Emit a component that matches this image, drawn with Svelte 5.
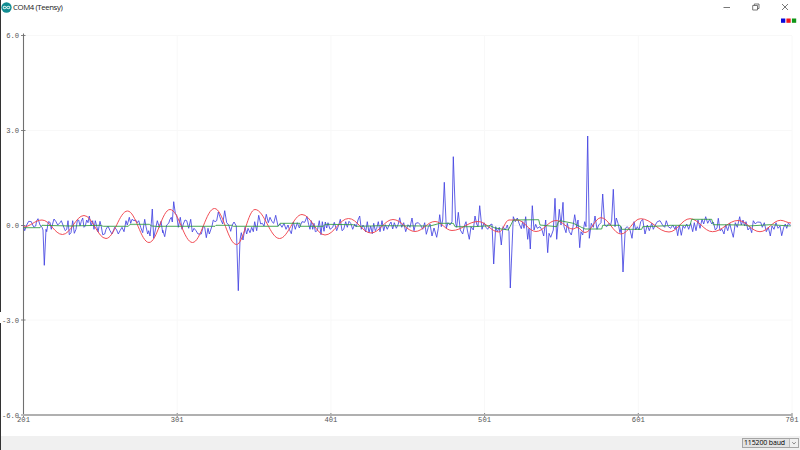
<script>
  const yTicks = [
    { label: "6.0", y: 35.5 },
    { label: "3.0", y: 130.5 },
    { label: "0.0", y: 225.5 },
    { label: "-3.0", y: 320 },
    { label: "-6.0", y: 415 }
  ];
  const xTicks = [201, 301, 401, 501, 601, 701].map((label, i) => ({ label, x: 23.5 + i * 153.7 }));

  // samples are stored in thirds of a pixel, relative to the chunk origin
  const raw = [
    [20, 190, "10,107 14,122 20,105 26,94 34,95 38,105 42,112 47,108 50,92 54,86 60,105 66,112 69,120 73,226 78,118 80,125 85,95 90,97 94,118 97,105 102,87 108,95 113,105 120,98 124,92 130,108 136,122 140,118 144,92 148,134 153,128 158,92 163,130 168,118 172,92 176,90 180,108 184,94 188,84 192,112 196,108 200,90 204,98 208,78 213,108 218,92 222,118 226,92 230,108 234,126 240,94 244,110 248,134 254,132 258,118 264,108 270,122 276,132 284,112 290,120 295,132 300,122 306,112 312,125 318,92 322,105 328,82 332,100 336,88 342,92 347,90 352,98 356,92 362,112 368,128 374,88 378,110 383,132 386,122 390,138 394,100 397,57 401,145 406,120 412,92 418,112 423,94 428,128"],
    [160, 190, "8,120 14,140 20,105 26,100 30,88 34,82 37,96 41,35 46,70 50,76 55,112 61,82 66,118 70,102 75,90 80,92 86,115 92,88 97,126 102,115 108,122 114,132 124,132 130,108 134,112 139,143 144,115 148,132 156,108 160,90 165,95 170,92 175,66 182,88 188,102 194,62 200,98 206,105 212,124 217,105 222,96 229,108 235,302 240,150 244,128 249,150 255,112 260,132 264,115 270,128 275,112 280,125 284,95 290,122 296,76 302,102 307,100 312,108 319,73 325,98 330,82 336,95 341,100 347,76 354,108 360,102 366,112 372,100 378,118 384,105 388,118 394,131 400,96 406,118 412,98 418,114 426,95 434,97 441,80"],
    [300, 190, "26,104 30,118 34,92 38,118 42,100 46,125 52,122 58,92 63,134 67,95 72,124 76,96 80,114 84,98 90,118 98,112 103,97 110,122 116,105 121,88 126,122 131,118 137,95 142,112 147,94 152,100 158,118 164,102 169,110 174,90 179,78 184,118 189,105 193,112 197,126 202,95 207,128 212,108 217,131 221,100 226,122 230,115 235,95 240,125 246,92 251,122 256,104 262,118 267,106 273,96 278,117 283,98 289,115 295,102 299,83 305,112 311,98 317,125 324,104 330,112 336,84 342,122 347,100 355,98 362,106 368,118 374,98 379,133 385,112"],
    [430, 130, "0,282 6,318 12,294 20,322 25,295 29,254 34,290 38,270 43,157 49,295 54,278 60,285 66,275 70,80 77,280 80,292 85,247 91,300 98,312 104,285 108,275 112,300 118,328 123,290 130,300 135,258 140,282 144,290 149,227 156,298 162,278 168,292 173,298 180,285 186,282 191,402 197,290 202,305 208,292 214,345 219,290 226,300 232,285 237,305 241,474 250,260 256,275 262,264 268,282 274,296 278,275 282,295 287,260 293,328 297,295 301,357 307,227 312,300 317,283 322,295 330,290 336,300 341,318 347,270 353,368 357,310 362,322 370,300 375,205 380,328 388,238 393,285 399,217"],
    [560, 130, "12,290 18,308 22,280 28,305 34,315 39,290 44,254 50,292 54,270 59,353 63,305 68,315 74,275 78,290 83,18 88,325 94,280 100,292 105,258 111,298 116,285 123,278 128,192 134,285 140,290 147,280 152,285 155,270 160,178 165,290 169,264 174,280 180,308 184,290 189,426 196,295 202,290 210,300 216,325 222,275 227,300 232,290 237,300 242,275 248,268 255,312 262,285 268,302 275,280 280,298 286,285 292,275 300,272 308,286 314,292 319,272 325,290 332,295 338,285 345,298"],
    [670, 190, "18,108 23,137 28,105 34,136 39,108 44,115 50,102 56,118 62,100 68,125 73,98 78,122 84,90 90,115 96,88 101,102 107,80 113,100 119,88 125,102 130,96 136,120 141,114 145,85 150,122 156,118 162,132 167,104 173,122 179,100 184,120 190,142 196,98 202,112 209,80 214,105 219,90 224,108 228,95 234,120 240,112 245,128 250,92 256,102 262,96 272,97 277,112 283,98 289,125 295,112 301,138 306,108 312,118 318,98 324,115 330,108 335,137 341,112 346,102 350,115 355,100 362,106"]
  ];

  const average = [
    [20, 190, "10,113 60,113 66,106 150,108 240,106 250,109 325,109 330,103 388,103 395,108 420,110"],
    [160, 190, "0,109 165,109 168,106 215,106 220,109 355,109 360,100 420,100"],
    [300, 190, "0,109 70,109 75,103 160,104 168,109 215,108 235,107 385,108"],
    [430, 130, "0,288 30,280 70,280 75,290 130,290 180,287 195,294 235,300 250,270 326,269 330,285 380,290 385,275"],
    [560, 130, "0,272 40,280 75,297 125,297 128,286 180,286 185,298 245,298 248,290 325,287"],
    [670, 190, "0,106 60,106 65,88 125,88 130,104 225,105 235,108 300,104 362,108"]
  ];

  // turning points of the filtered wave
  const wave = [
    [23, 227], [42, 220], [62.5, 234.5], [84, 215.5], [106, 238.5], [127.5, 211], [149, 242.5],
    [170, 209.5], [192.5, 242.5], [214.5, 208.5], [236.5, 244.5], [255, 209.5], [279.5, 238.5],
    [302, 214.5], [325, 235], [348.5, 218.5], [371, 233], [393, 219.5], [415, 231.5], [435, 221.5],
    [452, 230.5], [478, 221.5], [499, 232], [509, 220], [517, 220], [536, 231.5], [556, 220.5],
    [573, 229], [577, 227.5], [585, 232.5], [601, 217.7], [621, 234], [640.6, 218.7], [669, 232],
    [690, 218.7], [712.5, 231.7], [738, 220.5], [760, 231.7], [780.5, 220.3], [791, 223]
  ];

  function linePath(chunks) {
    return chunks
      .flatMap(([ox, oy, text]) =>
        text.split(" ").map((pair) => {
          const [x, y] = pair.split(",").map(Number);
          return `${(ox + x / 3).toFixed(1)} ${(oy + y / 3).toFixed(1)}`;
        })
      )
      .map((point, i) => (i ? "L" : "M") + point)
      .join("");
  }

  function wavePath(points) {
    let d = `M${points[0][0]} ${points[0][1]}`;
    for (let i = 1; i < points.length; i++) {
      const [x0, y0] = points[i - 1];
      const [x1, y1] = points[i];
      const h = (x1 - x0) * 0.38;
      d += `C${x0 + h} ${y0} ${x1 - h} ${y1} ${x1} ${y1}`;
    }
    return d;
  }

  const series = [
    { name: "raw", d: linePath(raw) },
    { name: "wave", d: wavePath(wave) },
    { name: "average", d: linePath(average) }
  ];
</script>

<main class="window">
  <header class="titlebar">
    <svg class="logo" viewBox="0 0 12 12">
      <circle cx="6" cy="6" r="5.6" />
      <path d="M6 6C5 4.6 2.4 4 2.4 6S5 7.4 6 6S9.6 4 9.6 6S7 7.4 6 6Z" />
    </svg>
    <span class="title">COM4 (Teensy)</span>
    <div class="controls">
      <svg viewBox="0 0 8 8"><path d="M.5 4.5H7" /></svg>
      <svg viewBox="0 0 8 8"><path d="M.7 2.5H5.5V7H.7ZM2.3 2.5V1H7V5.5H5.5" /></svg>
      <svg viewBox="0 0 8 8"><path d="M1 1L7 7M7 1L1 7" /></svg>
    </div>
  </header>

  <svg class="plot" viewBox="0 14 800 422">
    <g class="legend">
      <rect class="raw" x="781" y="18.5" width="4.3" height="4.3" />
      <rect class="wave" x="786.4" y="18.5" width="4.3" height="4.3" />
      <rect class="average" x="791.9" y="18.5" width="4.3" height="4.3" />
    </g>
    {#each yTicks as tick}
      <line class="grid" x1="24" x2="792" y1={tick.y} y2={tick.y} />
      <line class="tick" x1="21" x2="25.5" y1={tick.y} y2={tick.y} />
      <text x="19.2" y={tick.y + 2.7} text-anchor="end">{tick.label}</text>
    {/each}
    {#each xTicks as tick}
      <line class="grid" x1={tick.x} x2={tick.x} y1="36" y2="415" />
      <line class="tick" x1={tick.x} x2={tick.x} y1="413" y2="417" />
      <text x={tick.x} y="421.7" text-anchor="middle">{tick.label}</text>
    {/each}
    <path class="axis" d="M23.5 33.5V415" />
    <path class="axis base" d="M23 415H792" />
    {#each series as line}
      <path class="line {line.name}" d={line.d} />
    {/each}
    <path class="edge" d="M.5 14V312M.5 323V436" />
  </svg>

  <footer class="statusbar">
    <div class="select">
      <span class="value">115200 baud</span>
      <svg class="arrow" viewBox="0 0 8 9"><path d="M2 3.5L4 5.7L6 3.5" /></svg>
    </div>
  </footer>
</main>

<style>
  :global(body) {
    margin: 0;
    background: #fff;
  }

  .window {
    display: flex;
    flex-direction: column;
    width: 800px;
    height: 450px;
    overflow: hidden;
    background: #fff;
    font-family: "Open Sans", "Noto Sans", sans-serif;
    color: #222;
  }

  .titlebar {
    display: flex;
    align-items: center;
    height: 14px;
    border-left: 1px solid #333;
    box-sizing: border-box;
  }

  .logo {
    width: 11px;
    height: 11px;
  }

  .logo circle {
    fill: #128c91;
  }

  .logo path {
    fill: none;
    stroke: #d9f2f2;
    stroke-width: 1.1;
  }

  .title {
    margin-left: 1px;
    font-size: 7.8px;
    letter-spacing: -0.4px;
    line-height: 14px;
    white-space: nowrap;
  }

  .controls {
    display: flex;
    gap: 21px;
    margin-left: auto;
    padding-right: 11px;
  }

  .controls svg {
    width: 8px;
    height: 8px;
    fill: none;
    stroke: #555;
    stroke-width: 0.8;
  }

  .plot {
    display: block;
    width: 800px;
    height: 422px;
  }

  .plot text {
    font: 7.2px "Liberation Mono", monospace;
    fill: #555;
  }

  .grid {
    stroke: #f8f8f8;
  }

  .tick {
    stroke: #777;
    stroke-width: 0.9;
  }

  .axis {
    fill: none;
    stroke: #707070;
    stroke-width: 1.1;
  }

  .base {
    stroke: #b0b0b0;
    stroke-width: 2;
  }

  .edge {
    stroke: #333;
  }

  .legend .raw {
    fill: #0909dc;
  }

  .legend .wave {
    fill: #f01720;
  }

  .legend .average {
    fill: #109618;
  }

  .line {
    fill: none;
    stroke-width: 0.85;
    stroke-linejoin: round;
  }

  .line.raw {
    stroke: #4343e2;
  }

  .line.wave {
    stroke: #f0444d;
    stroke-width: 0.95;
  }

  .line.average {
    stroke: #2d9a3c;
  }

  .statusbar {
    display: flex;
    justify-content: flex-end;
    align-items: center;
    height: 14px;
    padding-right: 1px;
    box-sizing: border-box;
    border-left: 1px solid #333;
    background: #f0f0f0;
  }

  .select {
    display: flex;
    box-sizing: border-box;
    width: 57px;
    height: 10px;
    border: 1px solid #a5a5a5;
    background: #e3e3e3;
  }

  .value {
    flex: 1;
    padding-left: 1px;
    font-size: 7px;
    letter-spacing: -0.15px;
    line-height: 8px;
    color: #000;
    white-space: nowrap;
  }

  .arrow {
    width: 8px;
    height: 8px;
    background: #f0f0f0;
    border-left: 1px solid #bbb;
    fill: none;
    stroke: #666;
    stroke-width: 0.8;
  }
</style>
